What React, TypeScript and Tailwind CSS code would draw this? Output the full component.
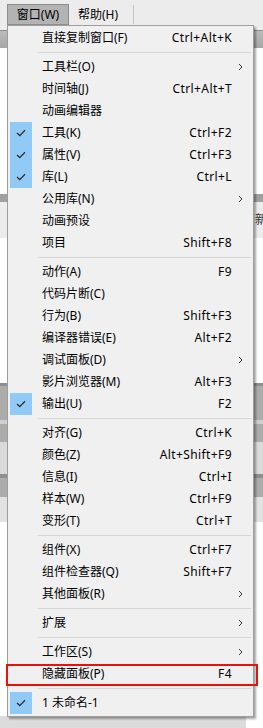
import React from 'react';

type Item =
  | { sep: true }
  | { sep?: false; label: string; shortcut?: string; sub?: boolean; checked?: boolean; boxed?: boolean };

const items: Item[] = [
  { label: '直接复制窗口(F)', shortcut: 'Ctrl+Alt+K' },
  { sep: true },
  { label: '工具栏(O)', sub: true },
  { label: '时间轴(J)', shortcut: 'Ctrl+Alt+T' },
  { label: '动画编辑器' },
  { label: '工具(K)', shortcut: 'Ctrl+F2', checked: true },
  { label: '属性(V)', shortcut: 'Ctrl+F3', checked: true },
  { label: '库(L)', shortcut: 'Ctrl+L', checked: true },
  { label: '公用库(N)', sub: true },
  { label: '动画预设' },
  { label: '项目', shortcut: 'Shift+F8' },
  { sep: true },
  { label: '动作(A)', shortcut: 'F9' },
  { label: '代码片断(C)' },
  { label: '行为(B)', shortcut: 'Shift+F3' },
  { label: '编译器错误(E)', shortcut: 'Alt+F2' },
  { label: '调试面板(D)', sub: true },
  { label: '影片浏览器(M)', shortcut: 'Alt+F3' },
  { label: '输出(U)', shortcut: 'F2', checked: true },
  { sep: true },
  { label: '对齐(G)', shortcut: 'Ctrl+K' },
  { label: '颜色(Z)', shortcut: 'Alt+Shift+F9' },
  { label: '信息(I)', shortcut: 'Ctrl+I' },
  { label: '样本(W)', shortcut: 'Ctrl+F9' },
  { label: '变形(T)', shortcut: 'Ctrl+T' },
  { sep: true },
  { label: '组件(X)', shortcut: 'Ctrl+F7' },
  { label: '组件检查器(Q)', shortcut: 'Shift+F7' },
  { label: '其他面板(R)', sub: true },
  { sep: true },
  { label: '扩展', sub: true },
  { sep: true },
  { label: '工作区(S)', sub: true },
  { label: '隐藏面板(P)', shortcut: 'F4', boxed: true },
  { sep: true },
  { label: '1 未命名-1', checked: true },
];

const Check = () => (
  <svg width="10" height="8" viewBox="0 0 10 8" fill="none">
    <path d="M1 4 L3.8 6.6 L9 1.2" stroke="#2f2f2f" strokeWidth="1.3" />
  </svg>
);

const Arrow = () => (
  <svg width="5" height="8" viewBox="0 0 5 8" fill="none">
    <path d="M1 1 L4 4 L1 7" stroke="#333" strokeWidth="1" />
  </svg>
);

const App: React.FC = () => {
  return (
    <div
      className="relative w-[263px] h-[728px] overflow-hidden bg-white text-[12px] text-black"
      style={{ fontFamily: '"Noto Sans", "Noto Sans CJK SC", sans-serif' }}
    >
      {/* Background application */}
      <div className="flex flex-col">
        <div className="h-[30px] bg-[#ececec] flex items-start pt-[4px]">
          <div className="ml-[7px] h-[21px] w-[62px] bg-[#b3b3b3] border border-[#8d8d8d] flex items-center justify-center">
            窗口(W)
          </div>
          <div className="ml-[9px] h-[21px] flex items-center">帮助(H)</div>
          <div className="ml-[15px] mt-[1px] h-[19px] w-px bg-[#c6c6c6]" />
        </div>
        <div className="h-px bg-[#8c8c8c]" />
        <div className="h-[17px] bg-gradient-to-b from-[#bcbcbc] to-[#a6a6a6]" />
        <div className="h-[146px] bg-white" />
        <div className="h-[8px] bg-[#a0a0a0]" />
        <div className="h-[36px] bg-[#ececec] flex items-center justify-end">
          <span className="mr-[-4px] text-[#333]">新</span>
        </div>
        <div className="h-[145px] bg-white" />
        <div className="h-[3px] bg-[#8f8f8f]" />
        <div className="h-[34px] bg-[#acacac]" />
        <div className="h-[4px] bg-[#d0d0d0]" />
        <div className="h-[18px] bg-[#acacac]" />
        <div className="h-[32px] bg-[#dadada]" />
        <div className="h-[4px] bg-[#8f8f8f]" />
        <div className="h-[19px] bg-[#acacac]" />
        <div className="h-[25px] bg-[#e2e2e2]" />
        <div className="h-[194px] bg-white" />
        <div className="h-[12px] flex">
          <div className="w-[246px] bg-[#dcdcdc]" />
          <div className="flex-1 bg-white" />
        </div>
      </div>

      {/* Dropdown menu */}
      <div className="absolute left-[7px] top-[25px] w-[247px] bg-[#f0f0f0] border border-[#9d9d9d] pt-px pb-[2px] shadow-[2px_2px_2px_rgba(0,0,0,0.35)]">
        {items.map((it, i) => {
          if (it.sep) {
            return (
              <div key={i} className="h-[7px] flex items-center">
                <div className="ml-[30px] mr-[2px] flex-1 h-px bg-[#d7d7d7]" />
              </div>
            );
          }
          return (
            <div key={i} className="relative h-[22px] flex items-center leading-none">
              <div
                className={`ml-[2px] w-[22px] h-[22px] flex items-center justify-center ${
                  it.checked ? 'bg-[#91c9f7]' : ''
                }`}
              >
                {it.checked && <Check />}
              </div>
              <span className="ml-[10px] flex-1 whitespace-nowrap">{it.label}</span>
              {it.shortcut && <span className="whitespace-nowrap tracking-[0.4px]">{it.shortcut}</span>}
              <div className="w-[21px] h-full flex items-center pl-[6px]">{it.sub && <Arrow />}</div>
              {it.boxed && (
                <div className="absolute -left-[2px] -right-[5px] top-px -bottom-px border-2 border-[#e8120c]" />
              )}
            </div>
          );
        })}
      </div>
    </div>
  );
};

export default App;
